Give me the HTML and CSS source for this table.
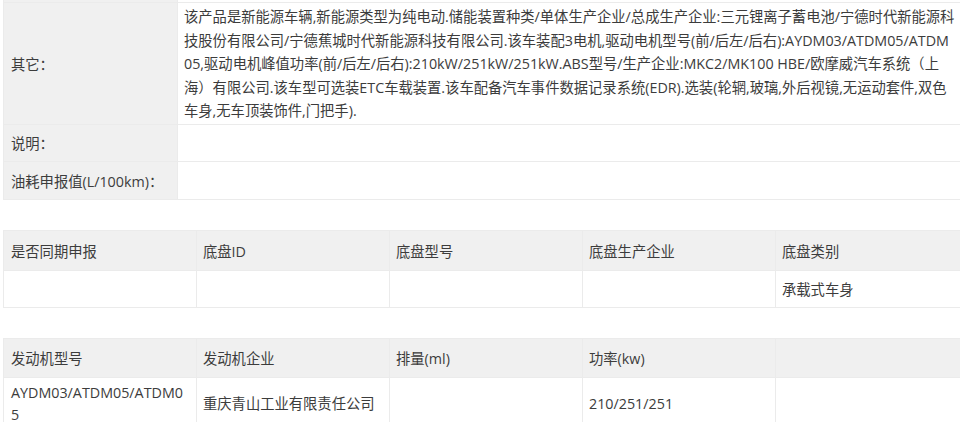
FILE: index.html
```html
<!DOCTYPE html>
<html lang="zh-CN">
<head>
    <meta charset="UTF-8">
    <meta name="viewport" content="width=device-width, initial-scale=1.0">
    <title>车辆参数</title>
    <link rel="stylesheet" href="styles.css">
</head>
<body>
    <div class="page">
        <!-- 其它信息 -->
        <table class="info-table">
            <tr class="row-prev">
                <th></th>
                <td></td>
            </tr>
            <tr class="row-other">
                <th>其它<span class="colon">：</span></th>
                <td>该产品是新能源车辆,新能源类型为纯电动.储能装置种类/单体生产企业/总成生产企业:三元锂离子蓄电池/宁德时代新能源科技股份有限公司/宁德蕉城时代新能源科技有限公司.该车装配3电机,驱动电机型号(前/后左/后右):AYDM03/ATDM05/ATDM05,驱动电机峰值功率(前/后左/后右):210kW/251kW/251kW.ABS型号/生产企业:MKC2/MK100 HBE/欧摩威汽车系统（上海）有限公司.该车型可选装ETC车载装置.该车配备汽车事件数据记录系统(EDR).选装(轮辋,玻璃,外后视镜,无运动套件,双色车身,无车顶装饰件,门把手).</td>
            </tr>
            <tr class="row-short">
                <th>说明<span class="colon">：</span></th>
                <td></td>
            </tr>
            <tr class="row-fuel">
                <th>油耗申报值(L/100km)<span class="colon">：</span></th>
                <td></td>
            </tr>
        </table>

        <!-- 底盘 -->
        <table class="grid-table">
            <tr>
                <th>是否同期申报</th>
                <th>底盘ID</th>
                <th>底盘型号</th>
                <th>底盘生产企业</th>
                <th>底盘类别</th>
            </tr>
            <tr class="row-data">
                <td></td>
                <td></td>
                <td></td>
                <td></td>
                <td>承载式车身</td>
            </tr>
        </table>

        <!-- 发动机 -->
        <table class="grid-table engine">
            <tr>
                <th>发动机型号</th>
                <th>发动机企业</th>
                <th>排量(ml)</th>
                <th>功率(kw)</th>
                <th></th>
            </tr>
            <tr class="row-data">
                <td class="top">AYDM03/ATDM05/ATDM05</td>
                <td>重庆青山工业有限责任公司</td>
                <td></td>
                <td>210/251/251</td>
                <td class="faded"></td>
            </tr>
        </table>
    </div>
</body>
</html>
```

FILE: styles.css
```css
/* Estilo general */
html, body {
    margin: 0;
    padding: 0;
    background: #fff;
    overflow: hidden;
}

body {
    font-family: "Open Sans", "Noto Sans CJK SC", sans-serif;
    font-size: 14.3px;
    color: #3c3c3c;
}

.page {
    width: 966px;
    padding-left: 3px;
}

table {
    width: 100%;
    border-collapse: collapse;
    table-layout: fixed;
}

th, td {
    border: 1px solid #ebebeb;
    font-weight: normal;
    text-align: left;
    vertical-align: middle;
    word-break: break-all;
}

.colon {
    font-family: "Noto Sans CJK TC", sans-serif;
}

/* Tabla de información */
.info-table th {
    width: 174px;
    background: #f0f0f0;
    padding: 0 7px;
    box-sizing: border-box;
}

.info-table td {
    padding: 2px 12px 1px 6px;
    line-height: 23.5px;
}

.info-table .row-prev th,
.info-table .row-prev td {
    height: 2px;
    padding: 0;
    border-top: none;
}

.info-table .row-other td {
    height: 113px;
}

.info-table .row-short th,
.info-table .row-short td {
    height: 36px;
    padding-top: 0;
    padding-bottom: 0;
}

.info-table .row-fuel th,
.info-table .row-fuel td {
    height: 37px;
    padding-top: 0;
    padding-bottom: 0;
}

/* Tablas de cuadrícula */
.grid-table {
    margin-top: 30px;
}

.grid-table th {
    background: #f0f0f0;
    height: 39px;
    padding: 0 6px;
}

.grid-table td {
    height: 36px;
    padding: 0 6px;
}

.grid-table th:first-child,
.grid-table td:first-child {
    padding-left: 7px;
}

.engine {
    margin-top: 30px;
}

.engine th {
    height: 38px;
}

.engine .row-data td {
    height: 44px;
    padding-top: 4px;
    padding-bottom: 6px;
    line-height: 22px;
}

.engine .row-data td.top {
    vertical-align: top;
}

.engine td.faded {
    border-color: #f8f8f8;
}
```
